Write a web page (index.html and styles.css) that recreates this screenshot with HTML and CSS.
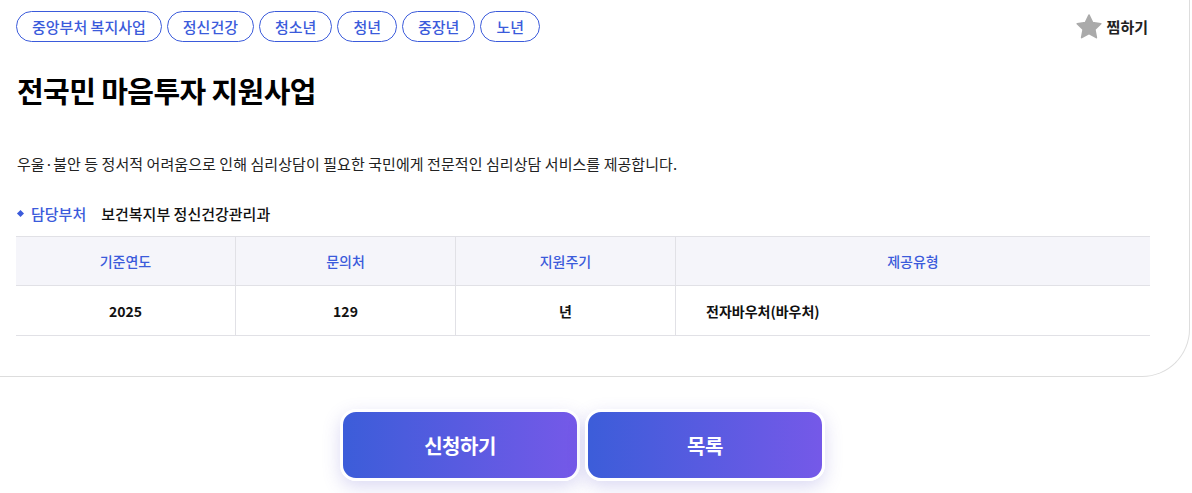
FILE: index.html
```html
<html>
  <head>
    <meta charset="utf-8">
    <link rel="stylesheet" href="styles.css">
  </head>
  <body>
    <div class="card">
      <div class="top-row">
        <div class="tags">
          <span class="tag">중앙부처 복지사업</span>
          <span class="tag">정신건강</span>
          <span class="tag">청소년</span>
          <span class="tag">청년</span>
          <span class="tag">중장년</span>
          <span class="tag">노년</span>
        </div>
        <div class="fav">
          <svg width="28" height="28" viewBox="0 0 24 24">
            <path d="M12 1.8l3.1 6.5 7 .9-5.1 4.9 1.3 7L12 17.7l-6.3 3.4 1.3-7L1.9 9.2l7-.9z" fill="#aaaaaa" stroke="#aaaaaa" stroke-width="1.4" stroke-linejoin="round"/>
          </svg>
          <span>찜하기</span>
        </div>
      </div>

      <h1 class="title">전국민 마음투자 지원사업</h1>

      <p class="desc">우울·불안 등 정서적 어려움으로 인해 심리상담이 필요한 국민에게 전문적인 심리상담 서비스를 제공합니다.</p>

      <div class="dept">
        <span class="dept-label">담당부처</span>
        <span class="dept-name">보건복지부 정신건강관리과</span>
      </div>

      <table class="info">
        <tr>
          <th>기준연도</th>
          <th>문의처</th>
          <th>지원주기</th>
          <th>제공유형</th>
        </tr>
        <tr>
          <td>2025</td>
          <td>129</td>
          <td>년</td>
          <td class="left">전자바우처(바우처)</td>
        </tr>
      </table>
    </div>

    <div class="actions">
      <button class="btn">신청하기</button>
      <button class="btn">목록</button>
    </div>
  </body>
</html>
```

FILE: styles.css
```css
body {
  margin: 0;
  background: #ffffff;
  font-family: "Noto Sans CJK KR", "Noto Sans", sans-serif;
  color: #111111;
}
.card {
  width: 1190px;
  height: 377px;
  box-sizing: border-box;
  border-right: 1px solid #dddddd;
  border-bottom: 1px solid #dddddd;
  border-bottom-right-radius: 48px;
  padding: 11px 0 0 16px;
}
.top-row {
  display: flex;
  justify-content: space-between;
  align-items: center;
  width: 1132px;
}
.tags {
  display: flex;
  gap: 5px;
}
.tag {
  height: 31px;
  box-sizing: border-box;
  border: 1px solid #3b5bdb;
  border-radius: 16px;
  padding: 0 15px;
  font-size: 15px;
  font-weight: 500;
  line-height: 29px;
  color: #3b5bdb;
}
.fav {
  display: flex;
  align-items: center;
  gap: 4px;
  font-size: 15px;
  font-weight: 700;
  color: #222222;
}
.title {
  margin: 29px 0 0 1px;
  font-size: 29px;
  font-weight: 700;
  letter-spacing: -0.6px;
  line-height: 38px;
  color: #000000;
}
.desc {
  margin: 43px 0 0 1px;
  font-size: 15px;
  line-height: 24px;
  letter-spacing: 0.06px;
  color: #222222;
}
.dept {
  margin: 27px 0 0 0;
  display: flex;
  align-items: center;
  font-size: 15px;
  font-weight: 500;
}
.dept-label {
  color: #3b5bdb;
  padding-left: 15px;
  position: relative;
}
.dept-label::before {
  content: "";
  position: absolute;
  left: 2px;
  top: 50%;
  width: 5px;
  height: 5px;
  margin-top: -3px;
  background: #3b5bdb;
  transform: rotate(45deg);
}
.dept-name {
  margin-left: 15px;
  color: #111111;
}
.info {
  margin-top: 12px;
  width: 1134px;
  border-collapse: collapse;
  font-size: 14px;
}
.info th,
.info td {
  border: 1px solid #e1e1e6;
  height: 49px;
  padding: 0;
  text-align: center;
}
.info td {
  height: 50px;
}
.info tr > :first-child {
  border-left: none;
}
.info tr > :last-child {
  border-right: none;
}
.info th {
  background: #f5f5fa;
  color: #3b5bdb;
  font-weight: 500;
  width: 219px;
}
.info th:last-child {
  width: auto;
}
.info td {
  font-weight: 700;
  color: #111111;
}
.info td.left {
  text-align: left;
  padding-left: 30px;
}
.actions {
  display: flex;
  justify-content: center;
  gap: 5px;
  padding: 32px 27px 0 0;
}
.btn {
  width: 240px;
  height: 72px;
  border: 3px solid #ffffff;
  border-radius: 16px;
  background: linear-gradient(90deg, #3c5dd9, #7559e8);
  box-shadow: 0 6px 18px rgba(90, 80, 200, 0.22);
  color: #ffffff;
  font-family: "Noto Sans CJK KR", sans-serif;
  font-size: 20px;
  font-weight: 700;
  letter-spacing: -0.5px;
}
```
